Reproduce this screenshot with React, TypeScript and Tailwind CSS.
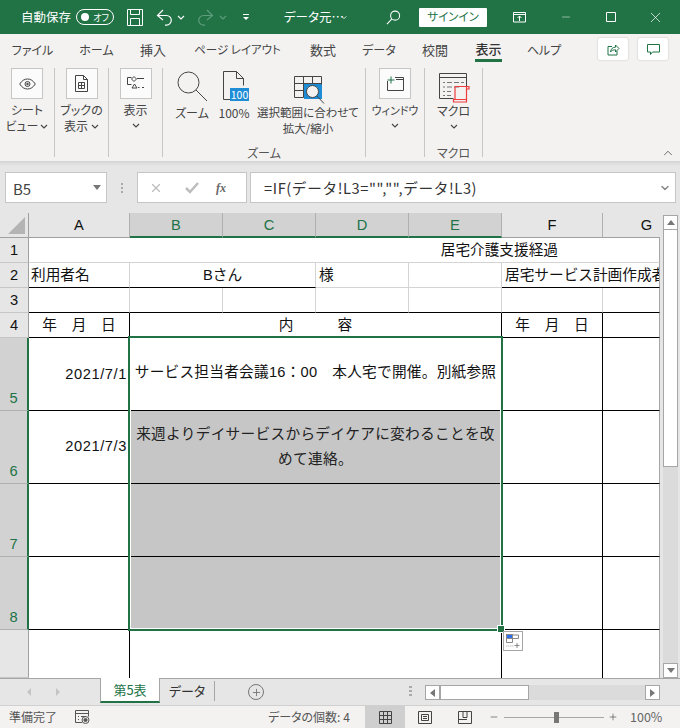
import type { ReactNode } from "react";
import { ChevronDown, ChevronUp, Minus, Plus, X } from "lucide-react";

const GREEN = "#217346";

function Chev({ className = "" }: { className?: string }) {
  return (
    <svg width="8" height="5" viewBox="0 0 8 5" className={className}>
      <path d="M1 1l3 3 3-3" fill="none" stroke="currentColor" strokeWidth="1.1" />
    </svg>
  );
}

function TitleBar() {
  return (
    <div className="h-[34px] bg-[#217346] text-white flex items-center relative">
      <span className="ml-[21px] w-[55px] text-[12.5px] [font-feature-settings:'palt']">自動保存</span>
      <div className="w-[38px] h-[16px] rounded-full border border-white flex items-center justify-between pl-[4px] pr-[4px]">
        <span className="w-[8px] h-[8px] rounded-full bg-white" />
        <span className="text-[9px] leading-none [font-feature-settings:'palt']">オフ</span>
      </div>
      <svg width="16" height="17" viewBox="0 0 16 17" className="ml-[13px]" fill="none" stroke="white">
        <path d="M.5.5h15v16H.5z" />
        <path d="M3.5.5v5h9v-5M3.5 16.5v-7h9v7" />
      </svg>
      <svg width="17" height="17" viewBox="0 0 17 17" className="ml-[13px]" fill="none" stroke="white" strokeWidth="1.2">
        <path d="M7 1L1.5 6.5 7 11" />
        <path d="M2 6.5h8.5a4.8 4.8 0 0 1 0 9.6H9" />
      </svg>
      <Chev className="ml-[4px]" />
      <svg width="17" height="17" viewBox="0 0 17 17" className="ml-[12px]" fill="none" stroke="#5f9d7c" strokeWidth="1.2">
        <path d="M10 1l5.5 5.5L10 11" />
        <path d="M15 6.5H6.5a4.8 4.8 0 0 0 0 9.6H8" />
      </svg>
      <Chev className="ml-[5px] text-[#5f9d7c]" />
      <svg width="8" height="8" viewBox="0 0 8 8" className="ml-[15px]" fill="white">
        <path d="M1 1h6v1H1z" />
        <path d="M1 4l3 3 3-3z" />
      </svg>
      <span className="ml-[34px] w-[54px] text-[12.5px] [font-feature-settings:'palt'] whitespace-nowrap">データ元… </span>
      <Chev className="ml-[2px] scale-75" />
      <svg width="15" height="15" viewBox="0 0 16 16" className="ml-[38px]" fill="none" stroke="white" strokeWidth="1.1">
        <circle cx="9.7" cy="6" r="4.8" />
        <path d="M6.3 9.4L1 15" />
      </svg>
      <div className="ml-[18px] w-[68px] h-[19px] bg-white rounded-[1px] text-[#217346] text-[11.5px] flex items-center justify-center [font-feature-settings:'palt']">
        サインイン
      </div>
      <svg width="14" height="11" viewBox="0 0 14 11" className="ml-[26px]" fill="none" stroke="white">
        <path d="M.5.5h12v9.5H.5zM.5 2.5h12" />
        <path d="M6.5 9V4M4.5 6l2-2 2 2" />
      </svg>
      <Minus size={12} className="ml-[33px]" strokeWidth={1} />
      <svg width="10" height="10" viewBox="0 0 10 10" className="ml-[34px]" fill="none" stroke="white">
        <path d="M.5.5h9v9h-9z" />
      </svg>
      <X size={17} className="ml-[31px]" strokeWidth={1} />
    </div>
  );
}

const tabs: [string, string, string][] = [
  ["ファイル", "w-[65px]", "text-[12px]"],
  ["ホーム", "w-[63px]", "text-[12px]"],
  ["挿入", "w-[50px]", "text-[13px]"],
  ["ページ レイアウト", "w-[119px]", "text-[11.5px]"],
  ["数式", "w-[52px]", "text-[13px]"],
  ["データ", "w-[60px]", "text-[12px]"],
  ["校閲", "w-[52px]", "text-[13px]"],
];

function TabRow() {
  return (
    <div className="h-[32px] flex items-start text-[13px] text-[#444] [font-feature-settings:'palt'] relative">
      {tabs.map(([name, w, size]) => (
        <div key={name} className={`${w} ${size} h-[24px] flex items-center justify-center mt-[4px] whitespace-nowrap`}>
          {name}
        </div>
      ))}
      <div className="w-[55px] flex flex-col items-center pt-[4px]">
        <span className="text-[#333] font-medium leading-[21px] border-b-[3px] border-[#217346] w-[27px] h-[24px] text-center whitespace-nowrap">表示</span>
      </div>
      <div className="w-[56px] h-[24px] mt-[4px] flex items-center justify-center text-[12px]">ヘルプ</div>
      <div className="ml-[26px] mt-[4px] w-[30px] h-[22px] bg-white rounded-[2px] shadow-[0_0_2px_#bbb] flex items-center justify-center">
        <svg width="13" height="13" viewBox="0 0 13 13" fill="none" stroke="#217346">
          <path d="M5 3.5H1v8.5h9V8" />
          <path d="M3.5 9c.3-3 2-4.800 5-4.800V2l3.500 3.500L8.500 9V6.800c-2 0-3.800.5-5 2.200z" />
        </svg>
      </div>
      <div className="ml-[10px] mt-[4px] w-[30px] h-[22px] bg-white rounded-[2px] shadow-[0_0_2px_#bbb] flex items-center justify-center">
        <svg width="13" height="13" viewBox="0 0 13 13" fill="none" stroke="#217346">
          <path d="M.5 1.500h12v7.500H5.500l-2 2.500V9H.5z" />
        </svg>
      </div>
    </div>
  );
}

function IconBox({ children }: { children: ReactNode }) {
  return (
    <div className="mx-auto w-[32px] h-[31px] border border-[#c8c6c4] bg-[#fbfbfb] flex items-center justify-center">
      {children}
    </div>
  );
}

function Group({ w, label, children }: { w: string; label?: string; children: ReactNode }) {
  return (
    <div className={`${w} h-[89px] border-r border-[#c8c6c4] flex flex-col shrink-0 relative`}>
      <div className="flex-1">{children}</div>
      {label && <div className="text-center text-[12px] leading-[16px] text-[#555] h-[16px] -mb-[4px]">{label}</div>}
    </div>
  );
}

function Ribbon() {
  return (
    <div className="h-[95px] pt-[2px] flex items-start text-[12px] leading-[16px] text-[#444] [font-feature-settings:'palt'] relative">
      <Group w="w-[55px]">
        <IconBox>
          <svg width="17" height="12" viewBox="0 0 17 12" fill="none" stroke="#444">
            <path d="M.7 6C3 2.500 5.500 1 8.500 1s5.500 1.500 7.800 5c-2.300 3.500-4.800 5-7.800 5S3 9.500.7 6z" />
            <circle cx="8.500" cy="6" r="2.500" />
            <circle cx="8.500" cy="6" r=".8" fill="#444" />
          </svg>
        </IconBox>
        <div className="text-center mt-[3px]">シート</div>
        <div className="text-center flex items-center justify-center gap-[2px]">
          ビュー <Chev />
        </div>
      </Group>
      <Group w="w-[54px]">
        <IconBox>
          <svg width="13" height="17" viewBox="0 0 13 17" fill="none" stroke="#444">
            <path d="M.5.5h8l4 4v12H.5z" />
            <path d="M8.500.5v4h4M3.500 7.500h6v6h-6zM6.500 7.500v6M3.500 10.500h6" />
          </svg>
        </IconBox>
        <div className="text-center mt-[3px]">ブックの</div>
        <div className="text-center flex items-center justify-center gap-[3px]">
          表示 <Chev />
        </div>
      </Group>
      <Group w="w-[54px]">
        <IconBox>
          <svg width="18" height="15" viewBox="0 0 18 15" fill="none" stroke="#444">
            <path d="M.5 1.500h4M.5 1.500v7h4M7 .5l2.500 2.500L7 5.500 4.500 3zM10 2.500h7M7.500 8l-2.500 4h5zM11 11.500h1.500M15 11.500h2" />
          </svg>
        </IconBox>
        <div className="text-center mt-[3px]">表示</div>
        <div className="flex justify-center mt-[5px]">
          <Chev />
        </div>
      </Group>
      <Group w="w-[203px]" label="ズーム">
        <div className="flex items-start">
          <div className="w-[60px] ml-[-1px] flex flex-col items-center">
            <svg width="31" height="31" viewBox="0 0 31 31" fill="none" stroke="#444" className="mt-[3px]">
              <circle cx="11.500" cy="11.500" r="10.500" />
              <path d="M19 19l11 11" />
            </svg>
            <div className="mt-[3px] whitespace-nowrap">ズーム</div>
          </div>
          <div className="w-[32px] ml-[-2px] flex flex-col items-center relative">
            <svg width="22" height="29" viewBox="0 0 22 29" fill="none" stroke="#444" className="mt-[3px] mr-[5px]">
              <path d="M.5 28.500V.5h13l7 7v7M13.500.5v7h7M.5 28.500h7" />
            </svg>
            <div className="absolute left-[10px] top-[20px] w-[19px] h-[13px] bg-[#1f8dd6] text-white text-[10.500px] leading-[13px] text-center">100</div>
            <div className="mt-[5px] mr-[4px]">100%</div>
          </div>
          <div className="ml-[6px] w-[100px] flex flex-col items-center">
            <svg width="31" height="30" viewBox="0 0 31 30" fill="none" stroke="#444" className="mt-[7px] ml-[2px] -mb-[4px]">
              <rect x="10" y="8" width="18" height="16" fill="#1f8dd6" stroke="none" />
              <path d="M.5 1.500h27v8M.5 1.500v21h9M.5 8.500h27M.5 15.500h9M9.500 1.500v21M18.500 1.500v7" />
              <circle cx="18.500" cy="16.500" r="6" fill="#f3f2f1" />
              <path d="M23 21l7 7.500" />
            </svg>
            <div className="mt-[4px] whitespace-nowrap leading-[15px] text-[11.5px]">選択範囲に合わせて</div>
            <div className="whitespace-nowrap leading-[16px] text-[11.5px]">拡大/縮小</div>
          </div>
        </div>
      </Group>
      <Group w="w-[59px]">
        <IconBox>
          <svg width="17" height="15" viewBox="0 0 17 15" fill="none">
            <path d="M.5 5v9.500h16V1.500H8M9 3.500h7.500" stroke="#444" />
            <path d="M4 .5v7M.5 4h7" stroke={GREEN} />
          </svg>
        </IconBox>
        <div className="text-center mt-[3px] text-[11px]">ウィンドウ</div>
        <div className="flex justify-center mt-[5px]">
          <Chev />
        </div>
      </Group>
      <Group w="w-[58px]" label="マクロ">
        <div className="flex justify-center pl-[2px]">
          <svg width="31" height="30" viewBox="0 0 31 30" fill="none" stroke="#444" className="mt-[5px] -mb-[2px]">
            <path d="M.5 25.500V.5h27v14M.5 4.500h27M.5 25.500h14" />
            <path d="M4 9.500h2M8 9.500h5M15 9.500h5M22 9.500h3M4 14h2M8 14h5M15 14h5M4 18.500h2M8 18.500h4M4 22.500h2M8 22.500h4" stroke="#777" />
            <path d="M16 13.500h11.500v15M27.500 13.500h2.500v2.500h-2.500M16 13.500v13M14.500 26.500h13v2.500h-13z" stroke="#ef3b3b" strokeWidth="1.200" />
          </svg>
        </div>
        <div className="text-center mt-[2px]">マクロ</div>
        <div className="flex justify-center mt-[5px]">
          <Chev />
        </div>
      </Group>
      <ChevronUp size={14} strokeWidth={1.2} className="absolute right-[5px] bottom-[1px] text-[#333]" />
    </div>
  );
}

function FormulaBar() {
  return (
    <div className="h-[52px] bg-[#e6e6e6] pt-[11px] bg-[linear-gradient(#d4d4d4,#e6e6e6_5px)]">
      <div className="h-[31px] flex items-stretch">
        <div className="ml-[5px] w-[102px] bg-white border border-[#c6c6c6] flex items-center justify-between pl-[7px] pr-[5px] text-[15px] text-[#444]">
          <span className="pt-[3px]">B5</span>
          <svg width="8" height="5" viewBox="0 0 8 5" fill="#777">
            <path d="M0 0h8L4 5z" />
          </svg>
        </div>
        <div className="w-[30px] flex flex-col items-center justify-center gap-[2px]">
          <span className="w-[2px] h-[2px] bg-[#aaa]" />
          <span className="w-[2px] h-[2px] bg-[#aaa]" />
          <span className="w-[2px] h-[2px] bg-[#aaa]" />
        </div>
        <div className="w-[110px] bg-white border border-[#c6c6c6] flex items-center relative">
          <X size={14} strokeWidth={2} className="ml-[11px] text-[#bdbdbd]" />
          <svg width="14" height="12" viewBox="0 0 14 12" fill="none" stroke="#bdbdbd" strokeWidth="2.500" className="ml-[22px]">
            <path d="M1 6l4 4 8-9" />
          </svg>
          <span className="ml-[17px] text-[12px] italic font-bold text-[#666] font-['Liberation_Serif',serif]">fx</span>
        </div>
        <div className="ml-[3px] w-[426px] bg-white border border-[#c6c6c6] flex items-center justify-between pl-[13px] pr-[4px] text-[14.670px] text-[#333] tracking-[0.6px]">
          <span className="whitespace-nowrap">=IF(データ!L3="","",データ!L3)</span>
          <ChevronDown size={12} strokeWidth={3} className="text-[#888]" />
        </div>
      </div>
    </div>
  );
}

function ColHead({ name, selected }: { name: string; selected?: boolean }) {
  return (
    <div
      className={
        selected
          ? "bg-[#d2d2d2] border-r border-[#b0b0b0] border-b-2 border-b-[#217346] text-[#217346] flex items-center justify-center"
          : "bg-[#e6e6e6] border-r border-[#b0b0b0] border-b border-b-[#a0a0a0] text-[#111] flex items-center justify-center"
      }
    >
      {name}
    </div>
  );
}

function RowHead({ n, selected }: { n: string; selected?: boolean }) {
  return (
    <div
      className={
        selected
          ? "bg-[#d2d2d2] border-r-2 border-[#217346] border-b border-b-[#b0b0b0] text-[#217346] flex items-end justify-center pb-[1px]"
          : "bg-[#e6e6e6] border-r border-[#a0a0a0] border-b border-b-[#c6c6c6] text-[#111] flex items-center justify-center"
      }
    >
      {n}
    </div>
  );
}

function Cell({ className = "", children }: { className?: string; children?: ReactNode }) {
  return (
    <div className={`bg-white border-r border-b flex items-center overflow-hidden whitespace-nowrap text-[14.670px] text-[#111] ${className}`}>
      {children}
    </div>
  );
}

const GRAY = "border-[#d4d4d4]";
const BLACK = "border-black";
const EDGE = "border-r-[#a6a6a6]";

function Sheet() {
  return (
    <div className="h-[465px] flex bg-[#e6e6e6]">
      <div className="relative w-[660px] grid grid-cols-[29px_101px_93px_93px_93px_93px_101px_57px] grid-rows-[25px_25px_25px_25px_25px_73px_73px_73px_73px_48px] text-[14.670px] font-['Liberation_Sans','Noto_Sans_CJK_JP',sans-serif]">
        {/* column heads */}
        <div className="bg-[#e6e6e6] border-r border-b border-[#a0a0a0] flex items-end justify-end pr-[3px] pb-[3px]">
          <div className="w-[17px] h-[17px] bg-[#b4b4b4] [clip-path:polygon(100%_0,100%_100%,0_100%)]" />
        </div>
        <ColHead name="A" />
        <ColHead name="B" selected />
        <ColHead name="C" selected />
        <ColHead name="D" selected />
        <ColHead name="E" selected />
        <ColHead name="F" />
        <div className="bg-[#e6e6e6] border-b border-b-[#a0a0a0] text-[#111] flex items-center justify-center pl-[30px]">G</div>

        {/* row 1 */}
        <RowHead n="1" />
        <Cell className={`col-span-7 justify-end pr-[101px] ${GRAY} ${EDGE}`}>居宅介護支援経過</Cell>

        {/* row 2 */}
        <RowHead n="2" />
        <Cell className={`${GRAY} border-b-black pl-[2px]`}>利用者名</Cell>
        <Cell className={`col-span-2 justify-center ${GRAY} border-b-black`}>Bさん</Cell>
        <Cell className={`${GRAY} pl-[3px]`}>様</Cell>
        <Cell className={GRAY} />
        <Cell className={`col-span-2 pl-[3px] ${BLACK} ${EDGE}`}>居宅サービス計画作成者</Cell>

        {/* row 3 */}
        <RowHead n="3" />
        <Cell className={`${GRAY} border-b-black`} />
        <Cell className={`${GRAY} border-b-black`} />
        <Cell className={`${GRAY} border-b-black`} />
        <Cell className={`${GRAY} border-b-black`} />
        <Cell className={`${GRAY} border-b-black`} />
        <Cell className={`${GRAY} border-b-black`} />
        <Cell className={`${BLACK} ${EDGE}`} />

        {/* row 4 */}
        <RowHead n="4" />
        <Cell className={`${BLACK} justify-center`}>年　月　日</Cell>
        <Cell className={`col-span-4 justify-center ${BLACK}`}>内　　　容</Cell>
        <Cell className={`${BLACK} justify-center`}>年　月　日</Cell>
        <Cell className={`${BLACK} ${EDGE}`} />

        {/* row 5 */}
        <RowHead n="5" selected />
        <Cell className={`${BLACK} justify-end pr-[2px] tracking-[0.6px]`}>2021/7/1</Cell>
        <Cell className={`col-span-4 justify-center ${BLACK} pb-[5px] tracking-[0.25px]`}>サービス担当者会議16：00　本人宅で開催。別紙参照</Cell>
        <Cell className={BLACK} />
        <Cell className={`${BLACK} ${EDGE}`} />

        {/* row 6 */}
        <RowHead n="6" selected />
        <Cell className={`${BLACK} justify-end pr-[2px] pb-[2px] tracking-[0.6px]`}>2021/7/3</Cell>
        <Cell className={`col-span-4 !bg-[#c6c6c6] ${BLACK} flex-col justify-center leading-[25px] pb-[1px] text-[#222] tracking-[0.3px]`}>
          <span>来週よりデイサービスからデイケアに変わることを改</span>
          <span>めて連絡。</span>
        </Cell>
        <Cell className={BLACK} />
        <Cell className={`${BLACK} ${EDGE}`} />

        {/* row 7 */}
        <RowHead n="7" selected />
        <Cell className={BLACK} />
        <Cell className={`col-span-4 !bg-[#c6c6c6] ${BLACK}`} />
        <Cell className={BLACK} />
        <Cell className={`${BLACK} ${EDGE}`} />

        {/* row 8 */}
        <RowHead n="8" selected />
        <Cell className={BLACK} />
        <Cell className={`col-span-4 !bg-[#c6c6c6] ${BLACK}`} />
        <Cell className={BLACK} />
        <Cell className={`${BLACK} ${EDGE}`} />

        {/* row 9 */}
        <RowHead n="" />
        <Cell className={`${BLACK} border-b-0`} />
        <Cell className={`col-span-4 ${BLACK} border-b-0`} />
        <Cell className={`${BLACK} border-b-0`} />
        <Cell className={`border-b-0 ${EDGE}`} />

        {/* selection border */}
        <div className="absolute col-start-3 col-span-4 row-start-6 row-span-4 -left-[2px] -right-px -top-[2px] -bottom-px border-2 border-[#217346] shadow-[inset_0_0_0_1px_#fff] pointer-events-none">
          <div className="absolute -right-[3px] -bottom-[3px] w-[6px] h-[6px] bg-[#217346] outline outline-1 outline-white" />
          <div className="absolute -right-[22px] -bottom-[22px] w-[20px] h-[20px] bg-white border border-[#a6a6a6] flex items-center justify-center">
            <svg width="14" height="14" viewBox="0 0 14 14" fill="none" stroke="#888">
              <rect x=".5" y=".5" width="6" height="4" fill="#2f6fed" stroke="#888" />
              <path d="M6.500 1h6v3.500h-6M.5 4.500v4h6v-4" />
              <path d="M.5 12h.8M2.500 12h.8M4.500 12h.8M6.500 12h.8M8.500 11.500h5M11 9v5" />
            </svg>
          </div>
        </div>
      </div>

      {/* vertical scrollbar */}
      <div className="ml-[3px] mt-[2px] w-[15px] flex flex-col bg-[#dbdbdb]">
        <div className="h-[15px] bg-white border border-[#a6a6a6] flex items-center justify-center">
          <svg width="8" height="5" viewBox="0 0 8 5" fill="#777"><path d="M4 0l4 5H0z" /></svg>
        </div>
        <div className="h-[237px] bg-white border border-t-0 border-[#a6a6a6]" />
        <div className="flex-1" />
        <div className="h-[15px] bg-white border border-[#a6a6a6] flex items-center justify-center">
          <svg width="8" height="5" viewBox="0 0 8 5" fill="#777"><path d="M0 0h8L4 5z" /></svg>
        </div>
      </div>
    </div>
  );
}

function SheetTabs() {
  return (
    <div className="h-[28px] bg-[#e6e6e6] border-t border-[#a6a6a6] border-b border-b-[#d0d0d0] flex items-start relative">
      <svg width="4" height="8" viewBox="0 0 4 8" fill="#c4c4c4" className="ml-[27px] mt-[9px]"><path d="M4 0v8L0 4z" /></svg>
      <svg width="4" height="8" viewBox="0 0 4 8" fill="#c4c4c4" className="ml-[25px] mt-[9px]"><path d="M0 0v8l4-4z" /></svg>
      <div className="ml-[40px] -mt-px w-[60px] h-[25px] bg-white border-x border-x-[#a6a6a6] border-b-2 border-b-[#217346] text-[#217346] text-[13px] flex items-center justify-center [font-feature-settings:'palt']">
        第5表
      </div>
      <div className="w-[55px] h-[20px] mt-[2px] border-r border-[#a6a6a6] text-[13px] text-[#333] flex items-center justify-center [font-feature-settings:'palt']">
        データ
      </div>
      <div className="ml-[33px] mt-[5px] w-[16px] h-[16px] rounded-full border border-[#777] flex items-center justify-center">
        <Plus size={11} strokeWidth={2} className="text-[#777]" />
      </div>
      <div className="ml-[145px] mt-[7px] flex flex-col gap-[2px]">
        <span className="w-[3px] h-[2px] bg-[#aaa]" />
        <span className="w-[3px] h-[2px] bg-[#aaa]" />
        <span className="w-[3px] h-[2px] bg-[#aaa]" />
      </div>
      <div className="ml-[13px] mt-[6px] w-[235px] h-[15px] bg-[#dbdbdb] flex">
        <div className="w-[15px] bg-white border border-[#a6a6a6] flex items-center justify-center">
          <svg width="5" height="8" viewBox="0 0 5 8" fill="#777"><path d="M5 0v8L0 4z" /></svg>
        </div>
        <div className="w-[89px] bg-white border border-[#a6a6a6]" />
        <div className="flex-1" />
        <div className="w-[15px] bg-white border border-[#a6a6a6] flex items-center justify-center">
          <svg width="5" height="8" viewBox="0 0 5 8" fill="#777"><path d="M0 0v8l5-4z" /></svg>
        </div>
      </div>
    </div>
  );
}

function StatusBar() {
  return (
    <div className="h-[22px] bg-[#f3f2f1] flex items-center text-[12px] text-[#555] [font-feature-settings:'palt']">
      <span className="ml-[9px] w-[66px] whitespace-nowrap">準備完了</span>
      <svg width="15" height="14" viewBox="0 0 15 14" fill="none" stroke="#555">
        <path d="M7 12.500H.5V.5h13v6M.5 3.500h13M3 6.500h1M6 6.500h5M3 9.500h1" />
        <circle cx="10.500" cy="10" r="3.500" />
        <circle cx="10.500" cy="10" r="1.600" fill="#555" />
      </svg>
      <span className="ml-[178px] w-[97px] whitespace-nowrap">データの個数: 4</span>
      <div className="w-[40px] h-[22px] bg-[#cfcfcf] flex items-center justify-center">
        <svg width="13" height="13" viewBox="0 0 13 13" fill="none" stroke="#444">
          <path d="M.5.5h12v12H.5zM4.500.5v12M8.500.5v12M.5 4.500h12M.5 8.500h12" />
        </svg>
      </div>
      <div className="w-[40px] flex justify-center">
        <svg width="14" height="13" viewBox="0 0 14 13" fill="none" stroke="#444">
          <path d="M.5.5h13v12H.5zM3.500 3.500h7v6h-7zM5 5.500h4M5 7.500h4" />
        </svg>
      </div>
      <div className="w-[40px] flex justify-center">
        <svg width="14" height="13" viewBox="0 0 14 13" fill="none" stroke="#444">
          <path d="M.5 12.500V.5h13v12zM5 .5v6h4v-6M.5 8.500H9" />
        </svg>
      </div>
      <Minus size={10} strokeWidth={1.500} className="ml-[4px] text-[#444]" />
      <div className="ml-[5px] w-[100px] h-[1px] bg-[#a6a6a6] flex justify-center items-center pl-[4px]">
        <span className="w-[5px] h-[11px] bg-[#777]" />
      </div>
      <Plus size={10} strokeWidth={1.500} className="ml-[4px] text-[#444]" />
      <span className="ml-[12px] text-[12.500px] text-[#666]">100%</span>
    </div>
  );
}

export default function App() {
  return (
    <div className="w-[680px] h-[728px] overflow-hidden bg-[#f3f2f1] font-['Noto_Sans_CJK_JP',sans-serif]">
      <TitleBar />
      <TabRow />
      <Ribbon />
      <FormulaBar />
      <Sheet />
      <SheetTabs />
      <StatusBar />
    </div>
  );
}
